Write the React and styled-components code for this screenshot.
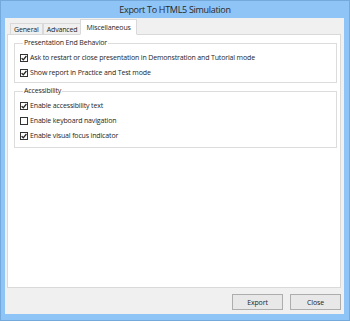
import React from 'react';
import styled, { createGlobalStyle } from 'styled-components';

const GlobalStyle = createGlobalStyle`
  html, body {
    margin: 0;
    padding: 0;
    width: 350px;
    height: 321px;
    overflow: hidden;
  }
  body {
    font-family: 'Open Sans', 'Noto Sans', sans-serif;
    color: #1e1e1e;
    letter-spacing: -0.15px;
  }
`;

const groups = [
  {
    title: 'Presentation End Behavior',
    items: [
      { label: 'Ask to restart or close presentation in Demonstration and Tutorial mode', checked: true },
      { label: 'Show report in Practice and Test mode', checked: true },
    ],
  },
  {
    title: 'Accessibility',
    items: [
      { label: 'Enable accessibility text', checked: true },
      { label: 'Enable keyboard navigation', checked: false },
      { label: 'Enable visual focus indicator', checked: true },
    ],
  },
];

const tabs = ['General', 'Advanced', 'Miscellaneous'];

const Window = styled.div`
  width: 350px;
  height: 321px;
  box-sizing: border-box;
  background: #8ec4f6;
  border: 1px solid #74a9dc;
  display: flex;
  flex-direction: column;
`;

const TitleBar = styled.div`
  height: 17px;
  display: flex;
  align-items: center;
  justify-content: center;
  font-size: 9px;
  letter-spacing: -0.3px;
  color: #2a2a2a;
`;

const Client = styled.div`
  flex: 1;
  margin: 0 5px 6px 4px;
  background: #f0f0f0;
  display: flex;
  flex-direction: column;
  padding: 1px 3px 4px 2px;
`;

const TabStrip = styled.div`
  display: flex;
  align-items: flex-end;
  padding-left: 3px;
  height: 16px;
  margin-bottom: -1px;
  position: relative;
  z-index: 1;
`;

const Tab = styled.div`
  height: ${p => (p.$active ? '16px' : '12px')};
  box-sizing: border-box;
  padding: 0 ${p => (p.$active ? '5px' : '3px')};
  display: flex;
  align-items: center;
  font-size: 7px;
  background: ${p => (p.$active ? '#fff' : '#f0f0f0')};
  border: 1px solid #d9d9d9;
  border-bottom: ${p => (p.$active ? '1px solid #fff' : '1px solid #d9d9d9')};
  margin-left: ${p => (p.$active ? '-1px' : '0')};
  & + & {
    border-left: ${p => (p.$active ? '1px solid #d9d9d9' : 'none')};
  }
`;

const Panel = styled.div`
  flex: 1;
  background: #fff;
  border: 1px solid #d9d9d9;
  padding: 3px 3px 0 6px;
  display: flex;
  flex-direction: column;
  gap: 3px;
`;

const Group = styled.fieldset`
  margin: 0;
  padding: 5px 0 4px 5px;
  border: 1px solid #dcdcdc;
  display: flex;
  flex-direction: column;
  gap: 5px;
  &:last-child {
    padding-bottom: 6px;
  }
`;

const Legend = styled.legend`
  font-size: 7px;
  line-height: 10px;
  padding: 0 1px;
  margin-left: 3px;
  color: #1e1e1e;
`;

const Row = styled.label`
  display: flex;
  align-items: center;
  gap: 2px;
  font-size: 7px;
  line-height: 10px;
  height: 10px;
`;

const Box = styled.span`
  width: 8px;
  height: 8px;
  flex: none;
  box-sizing: border-box;
  border: 1px solid #333;
  background: #fff;
  display: flex;
  align-items: center;
  justify-content: center;
`;

const Footer = styled.div`
  display: flex;
  justify-content: flex-end;
  gap: 7px;
  padding-top: 6px;
`;

const Button = styled.div`
  width: 51px;
  height: 16px;
  box-sizing: border-box;
  border: 1px solid #adadad;
  background: #e8e8e8;
  font-size: 7px;
  display: flex;
  align-items: center;
  justify-content: center;
`;

function Check({ checked }) {
  return (
    <Box>
      {checked && (
        <svg width="6" height="6" viewBox="0 0 6 6">
          <path d="M0.6 3.1 L2.3 4.8 L5.4 1" stroke="#222" strokeWidth="1.3" fill="none" />
        </svg>
      )}
    </Box>
  );
}

export default function App() {
  return (
    <>
      <GlobalStyle />
      <Window>
        <TitleBar>Export To HTML5 Simulation</TitleBar>
        <Client>
          <TabStrip>
            {tabs.map(t => (
              <Tab key={t} $active={t === 'Miscellaneous'}>{t}</Tab>
            ))}
          </TabStrip>
          <Panel>
            {groups.map(g => (
              <Group key={g.title}>
                <Legend>{g.title}</Legend>
                {g.items.map(it => (
                  <Row key={it.label}>
                    <Check checked={it.checked} />
                    {it.label}
                  </Row>
                ))}
              </Group>
            ))}
          </Panel>
          <Footer>
            <Button>Export</Button>
            <Button>Close</Button>
          </Footer>
        </Client>
      </Window>
    </>
  );
}
